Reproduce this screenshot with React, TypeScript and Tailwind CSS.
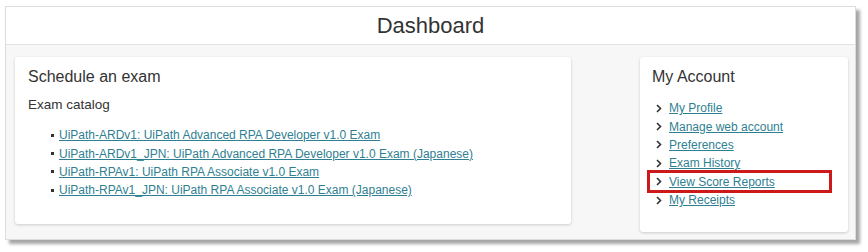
import React from "react";

const exams = [
  "UiPath-ARDv1: UiPath Advanced RPA Developer v1.0 Exam",
  "UiPath-ARDv1_JPN: UiPath Advanced RPA Developer v1.0 Exam (Japanese)",
  "UiPath-RPAv1: UiPath RPA Associate v1.0 Exam",
  "UiPath-RPAv1_JPN: UiPath RPA Associate v1.0 Exam (Japanese)",
];

const account = [
  "My Profile",
  "Manage web account",
  "Preferences",
  "Exam History",
  "View Score Reports",
  "My Receipts",
];

function Chevron() {
  return (
    <svg width="6" height="9" viewBox="0 0 6 9" className="shrink-0">
      <path d="M1 1 L4.5 4.5 L1 8" fill="none" stroke="#333" strokeWidth="1.6" />
    </svg>
  );
}

export default function App() {
  return (
    <div className="w-[868px] h-[252px] bg-white pt-[6px] pl-[5px] font-['Liberation_Sans',Arial,sans-serif] text-[#333]">
      <div className="w-[851px] h-[234px] border border-[#dcdcdc] bg-[#f7f7f7] shadow-[4px_4px_3px_rgba(0,0,0,0.35)] flex flex-col">
        <div className="h-[38px] bg-white border-b border-[#e2e2e2] flex items-center justify-center text-[22px] leading-none">
          Dashboard
        </div>
        <div className="flex pl-[9px] pt-[12px]">
          <div className="w-[556px] h-[167px] bg-white rounded-[3px] shadow-[0_1px_3px_rgba(0,0,0,0.18)] pl-[13px] pt-[10px]">
            <div className="text-[16px] leading-[20px]">Schedule an exam</div>
            <div className="text-[13.5px] leading-[18px] mt-[9px]">Exam catalog</div>
            <ul className="mt-[12px] pl-[23px]">
              {exams.map((e) => (
                <li key={e} className="flex items-center h-[18.4px] text-[12px]">
                  <span className="w-[3px] h-[3px] bg-[#333] mr-[5px] shrink-0" />
                  <a className="text-[#2f7f92] underline underline-offset-[1px] decoration-[#2f7f92]">
                    {e}
                  </a>
                </li>
              ))}
            </ul>
          </div>
          <div className="w-[208px] h-[175px] ml-[69px] bg-white rounded-[3px] shadow-[0_1px_3px_rgba(0,0,0,0.18)] pl-[12px] pt-[10px]">
            <div className="text-[16px] leading-[20px]">My Account</div>
            <ul className="mt-[12px]">
              {account.map((a) => (
                <li key={a} className="relative flex items-center h-[18.4px] text-[12px] pl-[4px]">
                  <Chevron />
                  <a className="ml-[7px] text-[#2f7f92] underline underline-offset-[1px] decoration-[#2f7f92]">
                    {a}
                  </a>
                  {a === "View Score Reports" && (
                    <span className="absolute left-[-5px] top-[-3px] w-[185px] h-[23px] border-[3px] border-[#cc1a1a]" />
                  )}
                </li>
              ))}
            </ul>
          </div>
        </div>
      </div>
    </div>
  );
}
